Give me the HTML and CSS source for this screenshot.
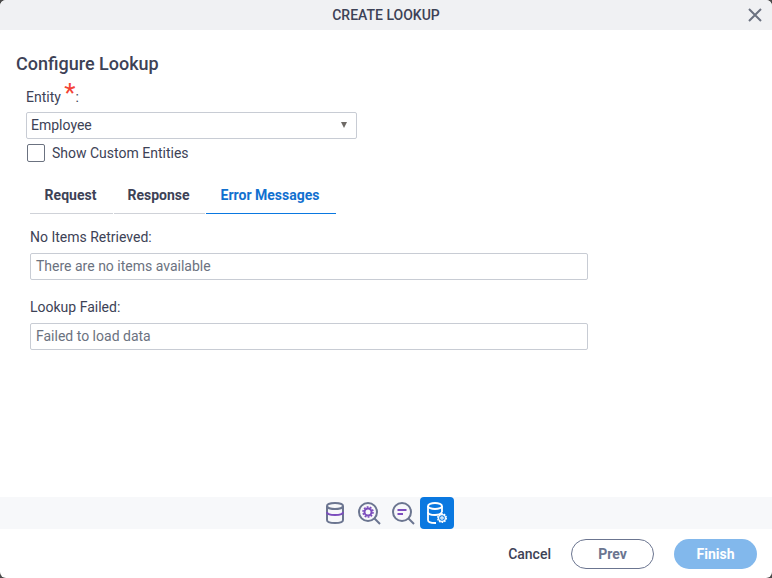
FILE: index.html
```html
<!DOCTYPE html>
<html lang="en">
<head>
    <meta charset="UTF-8">
    <title>Create Lookup</title>
    <link rel="stylesheet" href="styles.css">
</head>
<body>
    <div class="dialog">
        <div class="dialog-header">
            <span class="dialog-title">CREATE LOOKUP</span>
            <svg class="close-icon" width="14" height="14" viewBox="0 0 14 14"><path d="M1 1L13 13M13 1L1 13" stroke="#6b7280" stroke-width="2" fill="none"/></svg>
        </div>

        <div class="dialog-body">
            <h2 class="section-title">Configure Lookup</h2>

            <div class="entity-block">
                <div class="entity-label">Entity <span class="required">*</span>:</div>
                <div class="select-box">
                    <span>Employee</span>
                    <span class="select-arrow"></span>
                </div>
                <label class="check-row">
                    <span class="check-box"></span>
                    <span>Show Custom Entities</span>
                </label>
            </div>

            <div class="tabs">
                <div class="tab tab-request">Request</div>
                <div class="tab tab-response">Response</div>
                <div class="tab tab-active">Error Messages</div>
            </div>

            <div class="field">
                <div class="field-label">No Items Retrieved:</div>
                <div class="text-input">There are no items available</div>
            </div>
            <div class="field">
                <div class="field-label">Lookup Failed:</div>
                <div class="text-input">Failed to load data</div>
            </div>
        </div>

        <div class="step-bar">
            <div class="step">
                <svg width="22" height="24" viewBox="0 0 22 24" fill="none" stroke="#6b7590" stroke-width="2">
                    <ellipse cx="11" cy="5" rx="8" ry="3"/>
                    <path d="M3 5V19C3 21 6.500 22 11 22S19 21 19 19V5"/>
                    <path d="M3 11C3 13 6.500 14 11 14S19 13 19 11" stroke="#7c4dbd"/>
                </svg>
            </div>
            <div class="step">
                <svg width="24" height="24" viewBox="0 0 24 24" fill="none">
                    <circle cx="11" cy="11" r="9" stroke="#6b7590" stroke-width="2"/>
                    <path d="M17.500 17.500L23 23" stroke="#6b7590" stroke-width="2"/>
                    <circle cx="11" cy="11" r="3.500" stroke="#7c4dbd" stroke-width="2"/>
                    <circle cx="11" cy="11" r="5" stroke="#7c4dbd" stroke-width="1.600" stroke-dasharray="1.800 1.300"/>
                </svg>
            </div>
            <div class="step">
                <svg width="24" height="24" viewBox="0 0 24 24" fill="none">
                    <circle cx="11" cy="11" r="9" stroke="#6b7590" stroke-width="2"/>
                    <path d="M17.500 17.500L23 23" stroke="#6b7590" stroke-width="2"/>
                    <path d="M6.500 9H15.500M6.500 13H12" stroke="#7c4dbd" stroke-width="2"/>
                </svg>
            </div>
            <div class="step step-active">
                <svg width="22" height="24" viewBox="0 0 22 24" fill="none" stroke="#fff" stroke-width="1.800">
                    <ellipse cx="9" cy="5" rx="7" ry="3"/>
                    <path d="M2 5V19C2 21 5 22 9 22H10M16 5V11"/>
                    <path d="M2 11C2 13 5 14 9 14S14 13.500 16 11"/>
                    <circle cx="16" cy="17" r="3.400" stroke-width="1.200"/>
                    <circle cx="16" cy="17" r="4.300" stroke-width="1.400" stroke-dasharray="1.600 1.100"/>
                    <circle cx="16" cy="17" r="1.200" stroke-width="1.200"/>
                </svg>
            </div>
        </div>

        <div class="dialog-footer">
            <span class="btn-cancel">Cancel</span>
            <span class="btn btn-prev">Prev</span>
            <span class="btn btn-finish">Finish</span>
        </div>
    </div>
</body>
</html>
```

FILE: styles.css
```css
html, body {
    margin: 0;
    height: 100%;
    background-color: #4a4a4a;
}

body {
    font-family: Roboto, "Liberation Sans", sans-serif;
    font-size: 14px;
    color: #3d4256;
}

.dialog {
    width: 772px;
    height: 578px;
    background-color: #fff;
    border-radius: 6px;
    overflow: hidden;
    display: flex;
    flex-direction: column;
}

.dialog-header {
    height: 30px;
    flex-shrink: 0;
    background-color: #f0f1f3;
    position: relative;
    display: flex;
    align-items: center;
    justify-content: center;
}

.dialog-title {
    font-size: 14px;
    font-weight: 500;
    color: #3d4256;
}

.close-icon {
    position: absolute;
    right: 10px;
    top: 8px;
}

.dialog-body {
    flex: 1;
    padding: 23px 16px 0;
}

.section-title {
    margin: 0;
    font-size: 18px;
    font-weight: 500;
    line-height: 21px;
}

.entity-block {
    margin: 12px 0 0 10px;
    width: 331px;
}

.entity-label {
    line-height: 22px;
    height: 22px;
}

.required {
    color: #f44336;
    font-size: 26px;
    line-height: 14px;
    vertical-align: 0;
}

.select-box {
    margin-top: 4px;
    height: 23px;
    border: 1px solid #c8ccd4;
    border-radius: 2px;
    padding: 0 4px 2px;
    display: flex;
    align-items: center;
    justify-content: space-between;
}

.select-arrow {
    width: 0;
    height: 0;
    margin-right: 5px;
    border-left: 3.5px solid transparent;
    border-right: 3.5px solid transparent;
    border-top: 6px solid #6e6a66;
}

.check-row {
    display: flex;
    align-items: center;
    gap: 7px;
    margin-top: 5px;
    padding-left: 1px;
}

.check-box {
    width: 16px;
    height: 16px;
    border: 1px solid #6b7280;
    border-radius: 2px;
}

.tabs {
    display: flex;
    margin: 17px 0 0 14px;
    gap: 1px;
}

.tab {
    height: 35px;
    line-height: 33px;
    padding-right: 2px;
    box-sizing: border-box;
    text-align: center;
    font-weight: 700;
    border-bottom: 1px solid #cfd2d8;
}

.tab-request {
    width: 83px;
}

.tab-response {
    width: 91px;
}

.tab-active {
    width: 130px;
    color: #1170cf;
    border-bottom-color: #0a78e0;
}

.field {
    margin: 15px 0 0 14px;
    width: 558px;
}

.field + .field {
    margin-top: 19px;
}

.field-label {
    line-height: 16px;
}

.text-input {
    margin-top: 8px;
    height: 25px;
    line-height: 25px;
    border: 1px solid #c8ccd4;
    border-radius: 2px;
    padding: 0 5px;
    color: #6b7280;
}

.step-bar {
    height: 32px;
    flex-shrink: 0;
    background-color: #f7f8fa;
    display: flex;
    justify-content: center;
}

.step {
    width: 34px;
    height: 32px;
    display: flex;
    align-items: center;
    justify-content: center;
}

.step-active {
    background-color: #0a78e0;
    border-radius: 4px;
}

.dialog-footer {
    height: 49px;
    flex-shrink: 0;
    display: flex;
    align-items: center;
    justify-content: flex-end;
    padding-right: 15px;
}

.btn-cancel {
    font-weight: 500;
    margin-right: 20px;
}

.btn {
    width: 83px;
    height: 30px;
    box-sizing: border-box;
    border-radius: 15px;
    display: flex;
    align-items: center;
    justify-content: center;
    font-weight: 700;
}

.btn-prev {
    border: 1px solid #6b7590;
    color: #6b7590;
    margin-right: 20px;
}

.btn-finish {
    background-color: #82b8ec;
    color: #fff;
}
```
